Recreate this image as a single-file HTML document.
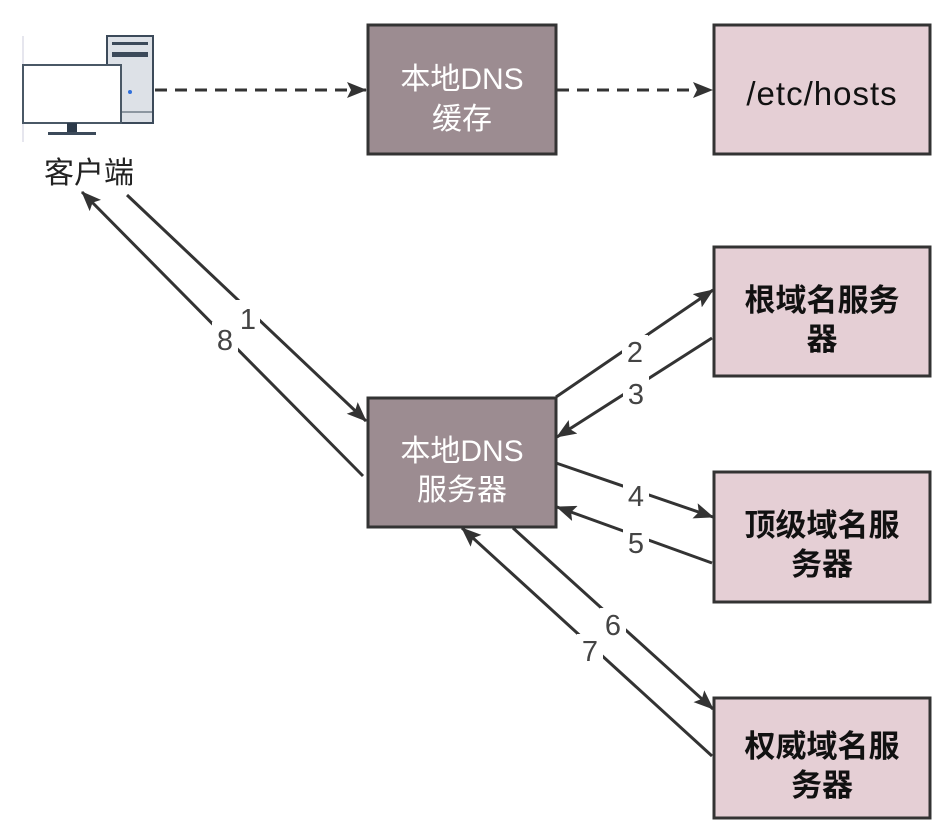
<!DOCTYPE html>
<html><head><meta charset="utf-8"><style>
html,body{margin:0;padding:0;background:#fff;width:949px;height:833px;overflow:hidden}
text{font-family:"Liberation Sans","Noto Sans CJK SC",sans-serif}
</style></head><body>
<svg width="949" height="833" viewBox="0 0 949 833" xmlns="http://www.w3.org/2000/svg">
<defs>
<marker id="b" markerWidth="20" markerHeight="16" refX="19" refY="8" orient="auto" markerUnits="userSpaceOnUse"><path d="M0,0 L20,8 L0,16 L4,8 Z" fill="#333"/></marker></defs>
<!-- computer -->
<line x1="23" y1="36" x2="23" y2="142" stroke="#ccd" stroke-width="1"/>
<rect x="107" y="36" width="46" height="87" fill="#dde1e7" stroke="#3c4a5a" stroke-width="2"/>
<rect x="112" y="42" width="36" height="3" fill="#3c4a5a"/>
<rect x="112" y="52" width="36" height="5" fill="#3c4a5a"/>
<line x1="122" y1="112" x2="153" y2="112" stroke="#3c4a5a" stroke-width="1"/>
<circle cx="130" cy="92" r="2" fill="#2f6fdb"/>
<rect x="23" y="65" width="98" height="58" fill="#fff" stroke="#4a5866" stroke-width="2"/>
<rect x="67" y="123" width="10" height="9" fill="#2c3a4a"/>
<rect x="48" y="132" width="48" height="3" fill="#3c4a5a"/>
<text x="89" y="183" font-size="30" text-anchor="middle" fill="#222">客户端</text>
<!-- boxes -->
<rect x="368" y="25" width="188" height="129" fill="#9c8c91" stroke="#333" stroke-width="3"/>
<text x="462" y="89" font-size="30" fill="#fff" text-anchor="middle">本地DNS</text>
<text x="462" y="129" font-size="30" fill="#fff" text-anchor="middle">缓存</text>
<rect x="714" y="25" width="216" height="129" fill="#e5cfd5" stroke="#333" stroke-width="3"/>
<text x="822" y="105" font-size="33" fill="#111" text-anchor="middle" letter-spacing="1">/etc/hosts</text>
<rect x="714" y="247" width="216" height="129" fill="#e5cfd5" stroke="#333" stroke-width="3"/>
<text x="822" y="311" font-size="31" fill="#111" text-anchor="middle" font-weight="bold">根域名服务</text>
<text x="822" y="350" font-size="31" fill="#111" text-anchor="middle" font-weight="bold">器</text>
<rect x="714" y="472" width="216" height="130" fill="#e5cfd5" stroke="#333" stroke-width="3"/>
<text x="822" y="536" font-size="31" fill="#111" text-anchor="middle" font-weight="bold">顶级域名服</text>
<text x="822" y="575" font-size="31" fill="#111" text-anchor="middle" font-weight="bold">务器</text>
<rect x="714" y="698" width="216" height="120" fill="#e5cfd5" stroke="#333" stroke-width="3"/>
<text x="822" y="757" font-size="31" fill="#111" text-anchor="middle" font-weight="bold">权威域名服</text>
<text x="822" y="796" font-size="31" fill="#111" text-anchor="middle" font-weight="bold">务器</text>
<rect x="368" y="398" width="188" height="129" fill="#9c8c91" stroke="#333" stroke-width="3"/>
<text x="462" y="461" font-size="30" fill="#fff" text-anchor="middle">本地DNS</text>
<text x="462" y="500" font-size="30" fill="#fff" text-anchor="middle">服务器</text>
<!-- lines -->
<g stroke="#333" stroke-width="3" fill="none">
<line x1="155" y1="90" x2="366" y2="90" stroke-dasharray="12,8" marker-end="url(#b)"/>
<line x1="557" y1="90" x2="712" y2="90" stroke-dasharray="12,8" marker-end="url(#b)"/>
<line x1="127" y1="195" x2="366" y2="421" marker-end="url(#b)"/>
<line x1="363" y1="476" x2="82" y2="192" marker-end="url(#b)"/>
<line x1="556" y1="397" x2="713" y2="290" marker-end="url(#b)"/>
<line x1="712" y1="338" x2="557" y2="437" marker-end="url(#b)"/>
<line x1="556" y1="463" x2="713" y2="517" marker-end="url(#b)"/>
<line x1="712" y1="563" x2="557" y2="507" marker-end="url(#b)"/>
<line x1="513" y1="528" x2="713" y2="709" marker-end="url(#b)"/>
<line x1="712" y1="756" x2="462" y2="528" marker-end="url(#b)"/>
</g>
<g font-size="29" fill="#444" text-anchor="middle">
<rect x="236" y="300" width="24" height="30" fill="#fff"/><text x="248" y="329">1</text>
<rect x="212" y="322" width="26" height="30" fill="#fff"/><text x="225" y="350">8</text>
<rect x="622" y="335" width="26" height="30" fill="#fff"/><text x="635" y="362">2</text>
<rect x="623" y="376" width="26" height="30" fill="#fff"/><text x="636" y="404">3</text>
<rect x="623" y="479" width="26" height="30" fill="#fff"/><text x="636" y="506">4</text>
<rect x="623" y="526" width="26" height="30" fill="#fff"/><text x="636" y="553">5</text>
<rect x="600" y="608" width="26" height="30" fill="#fff"/><text x="613" y="635">6</text>
<rect x="577" y="634" width="26" height="30" fill="#fff"/><text x="590" y="661">7</text>
</g>
</svg>
</body></html>
